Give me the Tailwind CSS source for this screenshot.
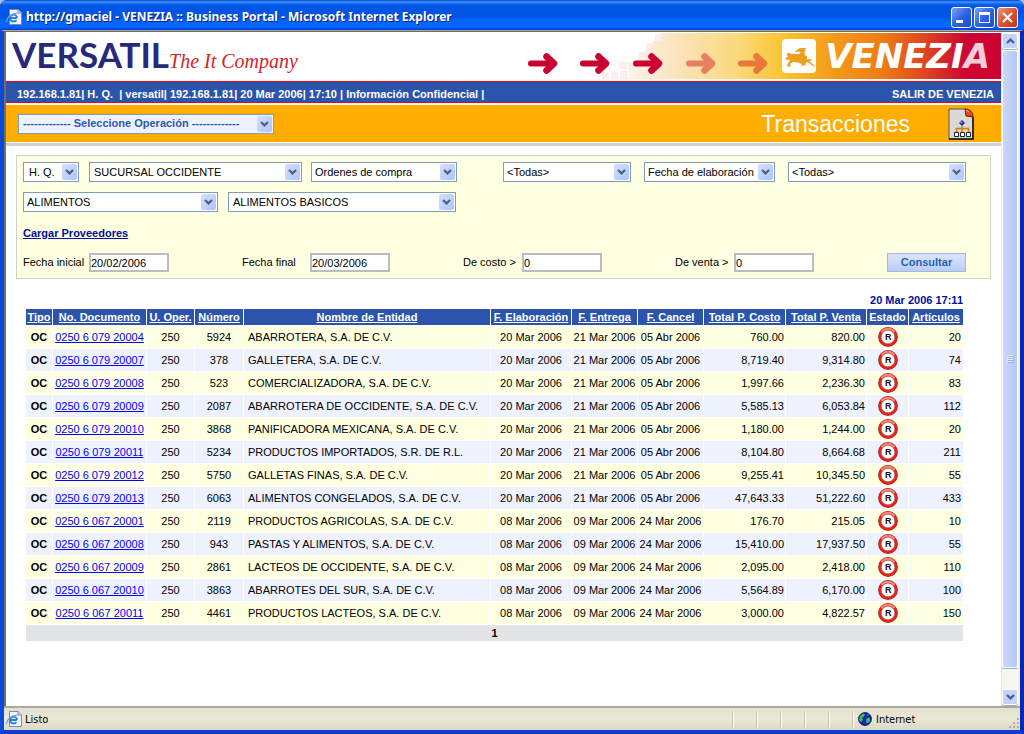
<!DOCTYPE html>
<html lang="es">
<head>
<meta charset="utf-8">
<title>VENEZIA :: Business Portal</title>
<script src="https://cdn.jsdelivr.net/npm/@tailwindcss/browser@4"></script>
</head>
<body class="bg-[#a9b8e8] font-['Liberation_Sans',Arial,sans-serif] text-[11px] leading-[13px] text-black">
<svg class="hidden">
  <symbol id="chev" viewBox="0 0 9 6"><path d="M1 1 L4.5 4.4 L8 1" fill="none" stroke="#4d6185" stroke-width="2.2"/></symbol>
  <symbol id="estado" viewBox="0 0 20 20">
    <circle cx="10" cy="10" r="9.9" fill="#a8281c"/><circle cx="10" cy="9.8" r="9.3" fill="#e6201a"/>
    <path d="M3.500 5 A8.2 8.2 0 0 1 16.500 5" fill="none" stroke="#ee8a80" stroke-width="2"/>
    <circle cx="10" cy="10" r="6.800" fill="#fff" stroke="#b8645c" stroke-width=".7"/>
    <text x="10.3" y="13.2" text-anchor="middle" font-family="Liberation Sans" font-weight="700" font-size="9" fill="#111">R</text>
  </symbol>
  <symbol id="iepage" viewBox="0 0 16 16">
    <path d="M3.500 .5 H12 L15.500 4 V15.500 H3.500 Z" fill="#f4f4fb" stroke="#7d86b8"/><path d="M12 .5 V4 H15.500" fill="#ccd" stroke="#7d86b8"/>
    <path d="M10.800 9 H4 A3.600 3.600 0 0 1 10.800 7.600 V9 M4 9 A3.600 3.600 0 0 0 10.400 11.200" fill="none" stroke="#2a7fd4" stroke-width="1.900"/>
    <path d="M1 13 C-.5 10 5 4.500 11.500 4" fill="none" stroke="#5aa7e8" stroke-width="1.200"/>
  </symbol>
</svg>

<div class="flex h-screen flex-col overflow-hidden rounded-t-[7px] bg-[#0a4be0]">
  <header class="flex h-[30px] shrink-0 items-center gap-1 bg-[linear-gradient(#0842c8_0,#3d95ff_2px,#0a62f0_4px,#0054e3_7px,#0055e5_16px,#0066ff_22px,#0066fc_27px,#003dd7_30px)] pt-1 pl-[6px] pr-[6px]">
    <svg class="size-4"><use href="#iepage"/></svg>
    <h1 class="flex-1 font-['Noto_Sans','Open_Sans',sans-serif] text-[12px] leading-4 font-bold text-white [text-shadow:1px_1px_#0a1e80]">http://gmaciel - VENEZIA :: Business Portal - Microsoft Internet Explorer</h1>
    <div class="flex gap-[2px]">
      <button aria-label="Minimizar" class="size-[21px] rounded-[3px] border border-white bg-linear-to-br from-[#7aa2f5] via-[#2f62e4] to-[#1c4bd0]"><svg viewBox="0 0 19 19"><path d="M4 12h7v3h-7z" fill="#fff"/></svg></button>
      <button aria-label="Maximizar" class="size-[21px] rounded-[3px] border border-white bg-linear-to-br from-[#7aa2f5] via-[#2f62e4] to-[#1c4bd0]"><svg viewBox="0 0 19 19"><path d="M4 4h11v11h-11zM5 7v7h9v-7z" fill="#fff" fill-rule="evenodd"/></svg></button>
      <button aria-label="Cerrar" class="size-[21px] rounded-[3px] border border-white bg-linear-to-br from-[#f0957a] via-[#e0502c] to-[#c03a14]"><svg viewBox="0 0 19 19"><path d="M5 5l9 9M14 5l-9 9" stroke="#fff" stroke-width="2.200"/></svg></button>
    </div>
  </header>

  <div class="flex min-h-0 flex-1 flex-col border-b-4 border-l-4 border-r-4 border-t border-b-[#0a3fd0] border-l-[#0a48d8] border-r-[#0528b8] border-t-[#aca899] bg-[#ece9d8]">
    <div class="flex min-h-0 flex-1 border-l-2 border-t border-[#716f64] bg-white pt-px">
      <main class="flex min-w-0 flex-1 flex-col">
        <section class="relative flex h-[48px] shrink-0 justify-between overflow-hidden">
          <svg class="absolute top-0 right-0 h-[46px] w-[400px]" viewBox="0 0 400 46">
            <defs><linearGradient id="sun"><stop offset="0" stop-color="#fdf2ea"/><stop offset=".15" stop-color="#fbe2b4"/><stop offset=".3" stop-color="#fbd878"/><stop offset=".42" stop-color="#fbc32c"/><stop offset=".55" stop-color="#f39a1a"/><stop offset=".68" stop-color="#ee7d14"/><stop offset=".8" stop-color="#dc4422"/><stop offset=".9" stop-color="#cd0832"/><stop offset="1" stop-color="#cc0033"/></linearGradient></defs>
            <path d="M60 0 H400 V46 H28 V30 H36 V27 Z" fill="url(#sun)"/>
            <path d="M1 39h7v7h-7zM10 39h7v7h-7zM19 38h8v8h-8zM18 29h8v7h-8zM27 29h8v8h-8zM37 19h6v7h-6zM45 10h6v7h-6zM54 1h6v7h-6z" fill="#fbeeed"/>
          </svg>
          <div class="relative flex pl-[6px]">
            <span class="font-['Lato',sans-serif] text-[35px] leading-[42px] font-bold text-[#28287c]">VERSATIL</span>
            <span class="pt-[5px] font-['Liberation_Serif',serif] text-[20px] leading-[46px] text-[#d8232a] italic">The It Company</span>
          </div>
          <div class="relative flex items-start pr-[11px]">
            <svg class="h-[46px] w-[254px]" viewBox="0 0 254 46" fill="none" stroke-linecap="round" stroke-linejoin="round">
              <defs><g id="flecha"><path d="M3 30.500H25" stroke-width="6"/><path d="M18.500 23.500L26 30.500L18.500 37.500" stroke-width="6.500"/></g></defs>
              <use href="#flecha" x="0" stroke="#cc0033"/><use href="#flecha" x="52" stroke="#cc0033"/><use href="#flecha" x="105" stroke="#cc0033"/>
              <use href="#flecha" x="158" stroke="#e97f62"/><use href="#flecha" x="210" stroke="#e8773a"/>
            </svg>
            <svg class="mt-[6px] size-[34px]" viewBox="0 0 34 34">
              <rect width="34" height="34" rx="4" fill="#fff"/>
              <path d="M4.500 15 L7 13.500 L9 15 H17 L19 14 L17 12.500 L13 13 L15 10.500 L18 9 H24.500 L22.500 11 L24 12 L21.500 13.500 L23.500 14 L22.500 16 L25 17.500 V20.500 L29 20 L30 21.500 L27 22 L33 27 L32 27.500 L25.500 23 L23.500 24 L24 26 L19 27 L20 25 L16 23.500 L11 23 L8 25 L9 27.500 H5 L5.500 25 L8 21.500 L6 20.500 L4 21 L3.500 19 L6 18 Z" fill="#eda01e"/>
            </svg>
            <span class="pt-[5px] pl-[9px] font-['DejaVu_Sans',sans-serif] text-[34px] leading-[36px] font-bold text-white italic">VENEZI<span class="text-[#f6ccd6]">A</span></span>
          </div>
        </section>

        <nav class="flex h-[22px] shrink-0 items-center justify-between border-y border-[#e8000f] bg-[#2d54ab] pt-[4px] pr-[7px] pl-[11px] text-[11px] font-bold whitespace-pre text-white">
          <span>192.168.1.81| H. Q.  | versatil| 192.168.1.81| 20 Mar 2006| 17:10 | Información Confidencial |</span>
          <a href="#salir">SALIR DE VENEZIA</a>
        </nav>

        <section class="mt-[2px] flex h-[41px] shrink-0 border-b-[3px] border-[#d2d2c8] bg-white pb-px">
          <div class="flex flex-1 items-center bg-[#ffad00] pr-[27px] pl-3">
            <div class="relative flex h-5 w-[256px] items-center border border-[#7f9db9] bg-[#eef2ff]">
              <select aria-label="Operación" class="h-full w-full appearance-none pr-5 pl-1 text-[11px] font-bold text-[#2d54ab]"><option>------------- Seleccione Operación -------------</option></select>
              <span class="pointer-events-none absolute right-px flex h-4 w-[15px] items-center justify-center rounded-[2px] bg-linear-to-br from-[#d5e0fd] to-[#aec4f8]"><svg class="h-[6px] w-[9px]"><use href="#chev"/></svg></span>
            </div>
            <h2 class="ml-auto text-[23px] leading-7 text-white">Transacciones</h2>
            <button aria-label="Mapa del sitio" class="ml-[38px]">
              <svg class="h-[32px] w-[26px]" viewBox="0 0 26 32">
                <path d="M1 1H18L25 9V31H1Z" fill="#d9d9d6" stroke="#555"/><path d="M1 31H25V9" fill="none" stroke="#111" stroke-width="1.500"/>
                <path d="M17 1 C22 1 25 4 25 9 L18 8 Z" fill="#e0481c" stroke="#7a1808"/><path d="M18 2 L21 4" stroke="#ffb18c"/>
                <path d="M14 12l3 3-3 3-3-3z" fill="#1a2d8c"/><circle cx="13.500" cy="14.500" r="1" fill="#9ab6f0"/>
                <path d="M14 18V24M8.500 24V20.500H20.500V24" fill="none" stroke="#d97a10" stroke-width="1.600"/>
                <path d="M6.500 24.500h4v4h-4zM12.500 24.500h4v4h-4zM18.500 24.500h4v4h-4z" fill="#fff" stroke="#222"/>
              </svg>
            </button>
          </div>
        </section>

        <form class="mt-[9px] mr-[10px] ml-[10px] flex h-[124px] shrink-0 flex-col border border-[#d1d1c5] bg-[#ffffe1] pt-[6px] pr-[24px] pl-[6px]">
          <div class="flex">
            <div class="relative flex h-5 w-[56px] items-center border border-[#7f9db9] bg-white"><select aria-label="Oficina" class="h-full w-full appearance-none pl-[5px]"><option>H. Q.</option></select><span class="pointer-events-none absolute right-px flex h-4 w-[15px] items-center justify-center rounded-[2px] bg-linear-to-br from-[#d5e0fd] to-[#aec4f8]"><svg class="h-[6px] w-[9px]"><use href="#chev"/></svg></span></div>
            <div class="relative ml-[10px] flex h-5 w-[213px] items-center border border-[#7f9db9] bg-white"><select aria-label="Sucursal" class="h-full w-full appearance-none pl-1"><option>SUCURSAL OCCIDENTE</option></select><span class="pointer-events-none absolute right-px flex h-4 w-[15px] items-center justify-center rounded-[2px] bg-linear-to-br from-[#d5e0fd] to-[#aec4f8]"><svg class="h-[6px] w-[9px]"><use href="#chev"/></svg></span></div>
            <div class="relative ml-[9px] flex h-5 w-[146px] items-center border border-[#7f9db9] bg-white"><select aria-label="Tipo de documento" class="h-full w-full appearance-none pl-[3px]"><option>Ordenes de compra</option></select><span class="pointer-events-none absolute right-px flex h-4 w-[15px] items-center justify-center rounded-[2px] bg-linear-to-br from-[#d5e0fd] to-[#aec4f8]"><svg class="h-[6px] w-[9px]"><use href="#chev"/></svg></span></div>
            <div class="relative ml-auto flex h-5 w-[128px] items-center border border-[#7f9db9] bg-white"><select aria-label="Estado" class="h-full w-full appearance-none pl-[3px]"><option>&lt;Todas&gt;</option></select><span class="pointer-events-none absolute right-px flex h-4 w-[15px] items-center justify-center rounded-[2px] bg-linear-to-br from-[#d5e0fd] to-[#aec4f8]"><svg class="h-[6px] w-[9px]"><use href="#chev"/></svg></span></div>
            <div class="relative ml-[13px] flex h-5 w-[131px] items-center border border-[#7f9db9] bg-white"><select aria-label="Fecha por" class="h-full w-full appearance-none pl-[3px]"><option>Fecha de elaboración</option></select><span class="pointer-events-none absolute right-px flex h-4 w-[15px] items-center justify-center rounded-[2px] bg-linear-to-br from-[#d5e0fd] to-[#aec4f8]"><svg class="h-[6px] w-[9px]"><use href="#chev"/></svg></span></div>
            <div class="relative ml-[13px] flex h-5 w-[178px] items-center border border-[#7f9db9] bg-white"><select aria-label="Proveedor" class="h-full w-full appearance-none pl-[3px]"><option>&lt;Todas&gt;</option></select><span class="pointer-events-none absolute right-px flex h-4 w-[15px] items-center justify-center rounded-[2px] bg-linear-to-br from-[#d5e0fd] to-[#aec4f8]"><svg class="h-[6px] w-[9px]"><use href="#chev"/></svg></span></div>
          </div>
          <div class="mt-[10px] flex gap-[10px]">
            <div class="relative flex h-5 w-[195px] items-center border border-[#7f9db9] bg-white"><select aria-label="Departamento" class="h-full w-full appearance-none pl-[3px]"><option>ALIMENTOS</option></select><span class="pointer-events-none absolute right-px flex h-4 w-[15px] items-center justify-center rounded-[2px] bg-linear-to-br from-[#d5e0fd] to-[#aec4f8]"><svg class="h-[6px] w-[9px]"><use href="#chev"/></svg></span></div>
            <div class="relative flex h-5 w-[228px] items-center border border-[#7f9db9] bg-white"><select aria-label="Categoría" class="h-full w-full appearance-none pl-1"><option>ALIMENTOS BASICOS</option></select><span class="pointer-events-none absolute right-px flex h-4 w-[15px] items-center justify-center rounded-[2px] bg-linear-to-br from-[#d5e0fd] to-[#aec4f8]"><svg class="h-[6px] w-[9px]"><use href="#chev"/></svg></span></div>
          </div>
          <a href="#proveedores" class="mt-[15px] self-start font-bold text-[#00109c] underline">Cargar Proveedores</a>
          <div class="mt-[13px] flex items-center">
            <label for="fi" class="w-[66px]">Fecha inicial</label><input id="fi" value="20/02/2006" class="h-[19px] w-[80px] border-2 border-[#bdbdbd] bg-white">
            <label for="ff" class="ml-[73px] w-[68px]">Fecha final</label><input id="ff" value="20/03/2006" class="h-[19px] w-[80px] border-2 border-[#bdbdbd] bg-white">
            <label for="dc" class="ml-[73px] w-[59px]">De costo &gt;</label><input id="dc" value="0" class="h-[19px] w-[80px] border-2 border-[#bdbdbd] bg-white">
            <label for="dv" class="ml-[73px] w-[59px]">De venta &gt;</label><input id="dv" value="0" class="h-[19px] w-[80px] border-2 border-[#bdbdbd] bg-white">
            <button type="button" class="ml-auto h-[19px] w-[79px] border border-[#9db9e0] bg-linear-to-b from-[#dce6fa] to-[#b9cdf5] font-bold text-[#2464ac]">Consultar</button>
          </div>
        </form>

        <section class="mt-[15px] mr-[38px] ml-5">
          <p class="mb-[2px] text-right font-bold text-[#00109c]">20 Mar 2006 17:11</p>
          <table class="w-full table-fixed border-separate border-spacing-0 whitespace-nowrap [&_td]:border-r [&_td]:border-b [&_td]:border-white [&_td]:p-0 [&_td:last-child]:border-r-0 [&_th]:border-r [&_th]:border-b [&_th]:border-white [&_th]:p-0 [&_th:last-child]:border-r-0">
            <colgroup><col class="w-[27px]"><col class="w-[94px]"><col class="w-[48px]"><col class="w-[49px]"><col><col class="w-[81px]"><col class="w-[66px]"><col class="w-[66px]"><col class="w-[82px]"><col class="w-[81px]"><col class="w-[42px]"><col class="w-[54px]"></colgroup>
            <thead>
              <tr class="h-[17px] bg-[#2d54ab] text-white">
                <th><a href="#o1" class="underline">Tipo</a></th><th><a href="#o2" class="underline">No. Documento</a></th><th><a href="#o3" class="underline">U. Oper.</a></th><th><a href="#o4" class="underline">Número</a></th><th><a href="#o5" class="underline">Nombre de Entidad</a></th><th><a href="#o6" class="underline">F. Elaboración</a></th><th><a href="#o7" class="underline">F. Entrega</a></th><th><a href="#o8" class="underline">F. Cancel</a></th><th><a href="#o9" class="underline">Total P. Costo</a></th><th><a href="#o10" class="underline">Total P. Venta</a></th><th>Estado</th><th><a href="#o11" class="underline">Artículos</a></th>
              </tr>
            </thead>
            <tbody id="filas"></tbody>
            <tfoot><tr class="h-[17px] bg-[#e3e4e6]"><td colspan="12" class="text-center font-bold">1</td></tr></tfoot>
          </table>
        </section>
      </main>

      <div class="flex w-[19px] shrink-0 flex-col border-r-2 border-l border-r-[#f4f2ea] border-l-[#ece9e0] bg-[#f6f6f2] pb-px">
        <button aria-label="Subir" class="flex h-4 items-center justify-center rounded-[2px] border border-white bg-[#c3d3fd] shadow-[0_1px_#9ab0dd]"><svg class="h-[6px] w-[9px] rotate-180"><use href="#chev"/></svg></button>
        <div class="mt-px flex h-[618px] items-center justify-center rounded-[2px] border border-white bg-linear-to-r from-[#cad8fe] to-[#b4c8f6] shadow-[0_1px_#9ab0dd]"><svg class="h-2 w-[7px]" viewBox="0 0 7 8"><path d="M0 .5H6M0 2.500H6M0 4.500H6M0 6.500H6" stroke="#eef4fe"/><path d="M1 1.500H7M1 3.500H7M1 5.500H7M1 7.500H7" stroke="#8cb0f8"/></svg></div>
        <button aria-label="Bajar" class="mt-auto flex h-4 items-center justify-center rounded-[2px] border border-white bg-[#c3d3fd] shadow-[0_1px_#9ab0dd]"><svg class="h-[6px] w-[9px]"><use href="#chev"/></svg></button>
      </div>
    </div>

    <footer class="flex h-6 shrink-0 items-center border-t-2 border-[#aca899] bg-linear-to-b from-[#e4e0cf] via-[#ebe8d7] to-[#dcd8c4] pl-[2px] font-['DejaVu_Sans_Condensed','Noto_Sans',sans-serif] text-[11px]">
      <svg class="size-4"><use href="#iepage"/></svg><span class="ml-[3px] flex-1">Listo</span>
      <div class="flex h-[17px]">
        <span class="w-6 border-l border-[#c9c5b2] shadow-[inset_1px_0_#fff]"></span><span class="w-6 border-l border-[#c9c5b2] shadow-[inset_1px_0_#fff]"></span><span class="w-6 border-l border-[#c9c5b2] shadow-[inset_1px_0_#fff]"></span><span class="w-6 border-l border-[#c9c5b2] shadow-[inset_1px_0_#fff]"></span><span class="w-6 border-l border-[#c9c5b2] shadow-[inset_1px_0_#fff]"></span>
        <div class="flex w-[156px] items-center gap-1 border-l border-[#c9c5b2] pl-[5px] shadow-[inset_1px_0_#fff]">
          <svg class="size-[14px]" viewBox="0 0 14 14"><circle cx="7" cy="7" r="6.500" fill="#1326c4" stroke="#0a1452" stroke-width=".8"/><path d="M2 4 L5 1.500 L7 2 L6 4.500 L4 6 L5 8 L3 10 L1 8ZM8 7 L11 5.500 L12.500 8 L10.500 11 L8.500 11ZM9 2 L11 3 L10 4Z" fill="#3fc23a"/></svg>
          <span>Internet</span>
        </div>
      </div>
      <svg class="mt-2 size-3" viewBox="0 0 12 12"><path d="M9 1h2v2h-2zM9 5h2v2h-2zM5 5h2v2h-2zM9 9h2v2h-2zM5 9h2v2h-2zM1 9h2v2h-2z" fill="#b4b09c"/></svg>
    </footer>
  </div>
</div>

<script>
const filas = [
 ["079 20004","5924","ABARROTERA, S.A. DE C.V.","760.00","820.00","20"],
 ["079 20007","378","GALLETERA, S.A. DE C.V.","8,719.40","9,314.80","74"],
 ["079 20008","523","COMERCIALIZADORA, S.A. DE C.V.","1,997.66","2,236.30","83"],
 ["079 20009","2087","ABARROTERA DE OCCIDENTE, S.A. DE C.V.","5,585.13","6,053.84","112"],
 ["079 20010","3868","PANIFICADORA MEXICANA, S.A. DE C.V.","1,180.00","1,244.00","20"],
 ["079 20011","5234","PRODUCTOS IMPORTADOS, S.R. DE R.L.","8,104.80","8,664.68","211"],
 ["079 20012","5750","GALLETAS FINAS, S.A. DE C.V.","9,255.41","10,345.50","55"],
 ["079 20013","6063","ALIMENTOS CONGELADOS, S.A. DE C.V.","47,643.33","51,222.60","433"],
 ["067 20001","2119","PRODUCTOS AGRICOLAS, S.A. DE C.V.","176.70","215.05","10"],
 ["067 20008","943","PASTAS Y ALIMENTOS, S.A. DE C.V.","15,410.00","17,937.50","55"],
 ["067 20009","2861","LACTEOS DE OCCIDENTE, S.A. DE C.V.","2,095.00","2,418.00","110"],
 ["067 20010","3863","ABARROTES DEL SUR, S.A. DE C.V.","5,564.89","6,170.00","100"],
 ["067 20011","4461","PRODUCTOS LACTEOS, S.A. DE C.V.","3,000.00","4,822.57","150"]
];
document.getElementById("filas").innerHTML = filas.map(([d,n,e,c,v,a]) => {
  const f = d.startsWith("079") ? ["20 Mar 2006","21 Mar 2006","05 Abr 2006"] : ["08 Mar 2006","09 Mar 2006","24 Mar 2006"];
  return `<tr class="h-[23px] odd:bg-[#ffffe1] even:bg-[#eef2ff]">
    <td class="text-center font-bold">OC</td><td class="text-center"><a href="#doc" class="text-[#0000ff] underline">0250 6 ${d}</a></td>
    <td class="text-center">250</td><td class="text-center">${n}</td><td><span class="pl-1">${e}</span></td>
    <td class="text-center">${f[0]}</td><td class="text-center">${f[1]}</td><td class="text-center">${f[2]}</td>
    <td class="text-right"><span class="pr-px">${c}</span></td><td class="text-right"><span class="pr-px">${v}</span></td>
    <td><svg class="mx-auto size-5"><use href="#estado"/></svg></td><td class="text-right"><span class="pr-[2px]">${a}</span></td></tr>`;
}).join("");
</script>
</body>
</html>
